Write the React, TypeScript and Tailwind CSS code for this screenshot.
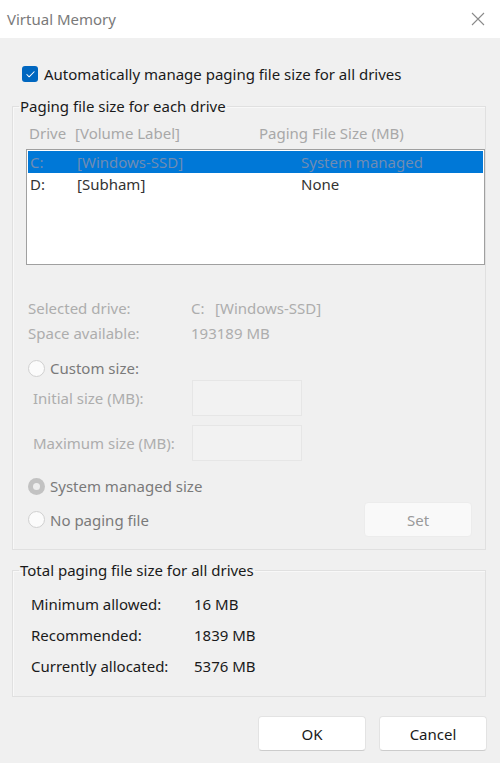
import { Check } from "lucide-react";

function Radio({ state }: { state: "off" | "on" }) {
  if (state === "on") {
    return (
      <span className="flex h-[17px] w-[17px] items-center justify-center rounded-full bg-[#c2c2c2]">
        <span className="h-[7px] w-[7px] rounded-full bg-[#ededed]" />
      </span>
    );
  }
  return <span className="h-[17px] w-[17px] rounded-full border border-[#d0d0d0] bg-[#fbfbfb]" />;
}

export default function App() {
  const totals = [
    { label: "Minimum allowed:", value: "16 MB" },
    { label: "Recommended:", value: "1839 MB" },
    { label: "Currently allocated:", value: "5376 MB" },
  ];

  return (
    <div className="h-[763px] w-[500px] overflow-hidden bg-[#f0f0f0] font-['Noto_Sans',sans-serif] text-[15px] leading-[20px] text-[#1a1a1a]">
      {/* title bar */}
      <div className="flex h-[38px] items-center justify-between bg-white pl-[7px] pr-[15px]">
        <span className="text-[15px] text-[#7a7a7a]">Virtual Memory</span>
        <svg width="14" height="14" viewBox="0 0 14 14" className="text-[#8a8a8a]">
          <path d="M1 1L13 13M13 1L1 13" stroke="currentColor" strokeWidth="1.1" />
        </svg>
      </div>

      <div className="pl-[12px] pr-[14px] pt-[26px]">
        <div className="flex h-[20px] items-center pl-[10px]">
          <span className="flex h-[16px] w-[16px] items-center justify-center rounded-[3px] bg-[#0067c0]">
            <Check size={11} strokeWidth={2.2} className="text-white" />
          </span>
          <span className="ml-[6px]">Automatically manage paging file size for all drives</span>
        </div>

        <fieldset className="mt-[12px] border border-[#e0e0e0] pb-[12px] shadow-[inset_1px_1px_0_#f8f8f8]">
          <legend className="ml-[6px] px-[1px] leading-[20px]">Paging file size for each drive</legend>
          <div className="pl-[13px]">
            <div className="mt-[7px] flex h-[20px] pl-[3px] text-[#a8a8a8]">
              <span className="w-[46px]">Drive</span>
              <span className="w-[184px]">[Volume Label]</span>
              <span>Paging File Size (MB)</span>
            </div>

            <div className="mt-[6px] h-[116px] border border-[#a0a0a0] bg-white p-[1px]">
              <div className="flex h-[22px] items-center bg-[#0078d7] pl-[2px] text-[#6f8cb3]">
                <span className="w-[47px]">C:</span>
                <span className="w-[224px]">[Windows-SSD]</span>
                <span>System managed</span>
              </div>
              <div className="flex h-[22px] items-center pl-[2px] text-[#333333]">
                <span className="w-[47px]">D:</span>
                <span className="w-[224px]">[Subham]</span>
                <span>None</span>
              </div>
            </div>

            <div className="mt-[30px] pl-[2px] text-[#adadad]">
              <div className="flex h-[25px] items-center">
                <span className="w-[163px]">Selected drive:</span>
                <span className="w-[24px]">C:</span>
                <span>[Windows-SSD]</span>
              </div>
              <div className="flex h-[25px] items-center">
                <span className="w-[163px]">Space available:</span>
                <span>193189 MB</span>
              </div>
            </div>

            <div className="mt-[13px] flex h-[20px] items-center pl-[2px] text-[#7a7a7a]">
              <Radio state="off" />
              <span className="ml-[5px]">Custom size:</span>
            </div>

            <div className="mt-[2px] flex h-[36px] items-center pl-[7px] text-[#adadad]">
              <span className="w-[159px]">Initial size (MB):</span>
              <span className="h-[36px] w-[110px] border border-[#e6e6e6] bg-[#f2f2f2]" />
            </div>
            <div className="mt-[9px] flex h-[36px] items-center pl-[7px] text-[#adadad]">
              <span className="w-[159px]">Maximum size (MB):</span>
              <span className="h-[36px] w-[110px] border border-[#e6e6e6] bg-[#f2f2f2]" />
            </div>

            <div className="mt-[15px] flex h-[20px] items-center pl-[2px] text-[#7a7a7a]">
              <Radio state="on" />
              <span className="ml-[5px]">System managed size</span>
            </div>

            <div className="mt-[6px] flex h-[35px] items-center pl-[2px] text-[#7a7a7a]">
              <Radio state="off" />
              <span className="ml-[5px]">No paging file</span>
              <button className="ml-auto mr-[13px] h-[35px] w-[108px] rounded-[4px] border border-[#ececec] bg-[#f9f9f9] text-[#9a9a9a]">
                Set
              </button>
            </div>
          </div>
        </fieldset>

        <fieldset className="mt-[10px] border border-[#e0e0e0] pb-[15px] shadow-[inset_1px_1px_0_#f8f8f8]">
          <legend className="ml-[6px] px-[1px] leading-[20px]">Total paging file size for all drives</legend>
          <div className="mt-[8px] pl-[18px]">
            {totals.map(t => (
              <div key={t.label} className="flex h-[31px] items-center">
                <span className="w-[163px]">{t.label}</span>
                <span>{t.value}</span>
              </div>
            ))}
          </div>
        </fieldset>

        <div className="-mr-[1px] mt-[19px] flex justify-end gap-[13px]">
          <button className="h-[35px] w-[108px] rounded-[4px] border border-[#e3e3e3] border-b-[#cccccc] bg-white">
            OK
          </button>
          <button className="h-[35px] w-[108px] rounded-[4px] border border-[#e3e3e3] border-b-[#cccccc] bg-white">
            Cancel
          </button>
        </div>
      </div>
    </div>
  );
}
